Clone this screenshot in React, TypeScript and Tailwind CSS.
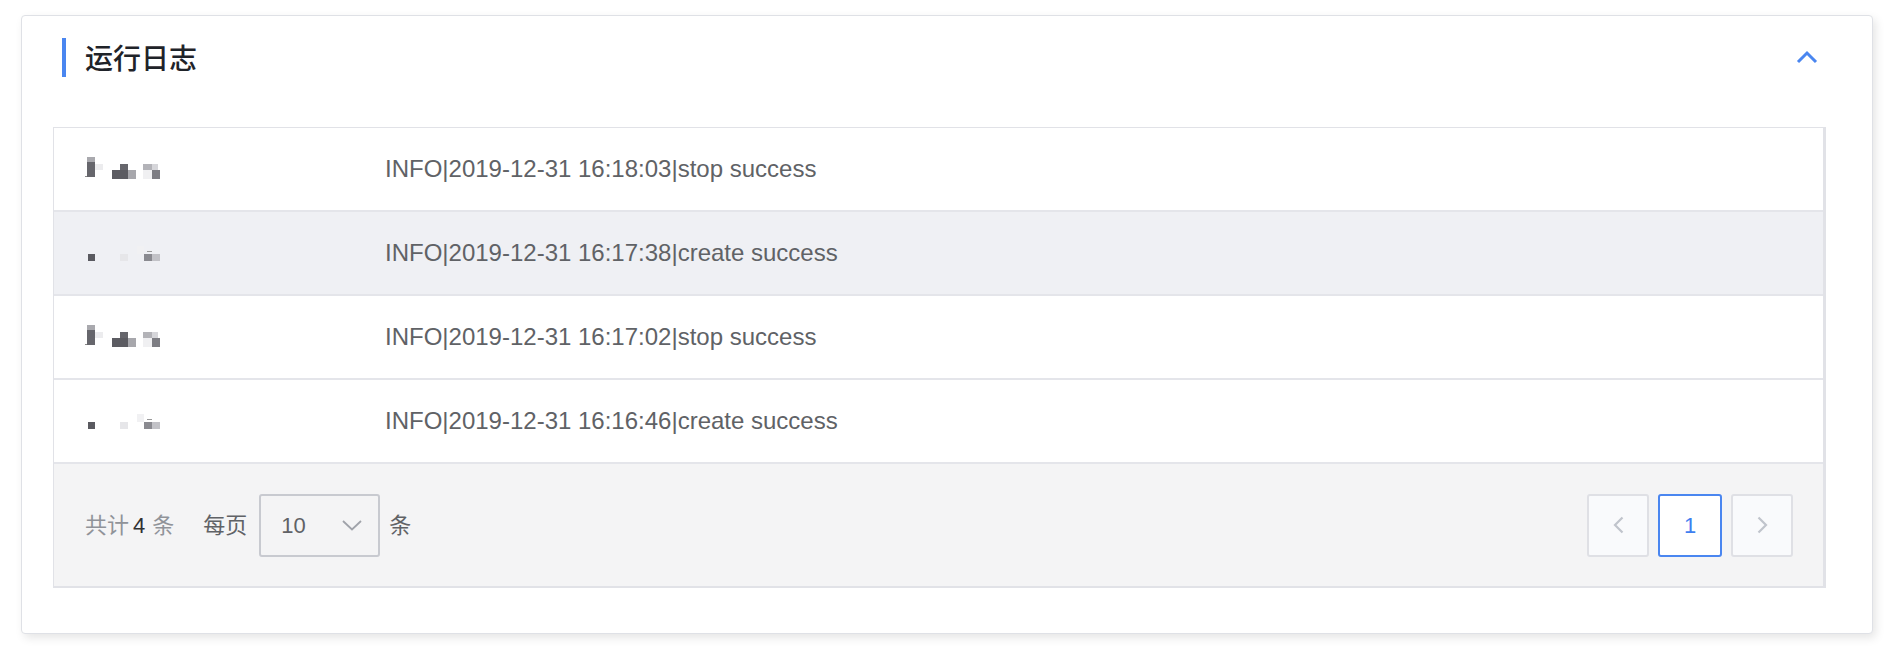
import React from "react";

type Block = [number, number, number, number, string];

// pixelated (masked) operator names
const blurA: Block[] = [
  [2, 2, 8, 5, "#a9a9ae"],
  [2, 7, 8, 15, "#66666c"],
  [0, 21, 2, 1, "#888"],
  [10, 9, 8, 6, "#ececee"],
  [35, 9, 8, 6, "#66666c"],
  [27, 15, 16, 9, "#5c5c62"],
  [43, 15, 8, 9, "#a7a7ac"],
  [58, 9, 9, 6, "#b3b3b8"],
  [67, 9, 6, 6, "#d6d6da"],
  [58, 15, 9, 9, "#f0f0f2"],
  [67, 15, 8, 9, "#7d7d83"],
];

const blurB: Block[] = [
  [3, 15, 7, 7, "#5a5a60"],
  [35, 15, 8, 7, "#e6e6e9"],
  [52, 7, 7, 8, "#f1f1f3"],
  [59, 15, 8, 7, "#8a8a90"],
  [67, 15, 8, 7, "#c2c2c7"],
  [62, 12, 5, 1, "#999"],
];

const logs = [
  { blur: blurA, text: "INFO|2019-12-31 16:18:03|stop success" },
  { blur: blurB, text: "INFO|2019-12-31 16:17:38|create success" },
  { blur: blurA, text: "INFO|2019-12-31 16:17:02|stop success" },
  { blur: blurB, text: "INFO|2019-12-31 16:16:46|create success" },
];

function Blurred({ blocks }: { blocks: Block[] }) {
  return (
    <svg width="80" height="28" viewBox="0 0 80 28">
      {blocks.map(([x, y, w, h, c], i) => (
        <rect key={i} x={x} y={y} width={w} height={h} fill={c} />
      ))}
    </svg>
  );
}

export default function App() {
  return (
    <div className="min-h-screen bg-white pt-[15px] pl-[21px] pr-[15px] font-['Liberation_Sans','Noto_Sans_CJK_SC',sans-serif]">
      <div className="rounded-[4px] border border-[#dfe1e6] bg-white pb-[45px] shadow-[3px_4px_10px_rgba(0,0,0,0.1)]">
        {/* header */}
        <div className="flex h-[82px] items-center justify-between pl-[40px] pr-[54px]">
          <div className="flex items-center">
            <span className="h-[39px] w-[4px] bg-[#4a86f0]" />
            <h2 className="ml-[19px] font-['Noto_Sans_CJK_SC',sans-serif] text-[28px] font-medium text-[#1f2329]">
              运行日志
            </h2>
          </div>
          <svg width="22" height="14" viewBox="0 0 22 14" fill="none">
            <polyline points="2,12 11,3 20,12" stroke="#4a86f0" strokeWidth="3" />
          </svg>
        </div>

        {/* log table */}
        <div className="ml-[31px] mr-[46px] mt-[29px] border border-r-[3px] border-b-2 border-[#e1e2e7]">
          {logs.map((log, i) => (
            <div
              key={i}
              className={`flex h-[84px] items-center border-b-2 border-[#e4e5ea] ${
                i === 1 ? "bg-[#eff0f4]" : "bg-white"
              }`}
            >
              <div className="w-[331px] pl-[31px]">
                <Blurred blocks={log.blur} />
              </div>
              <span className="text-[24px] text-[#606266]">{log.text}</span>
            </div>
          ))}

          {/* pagination */}
          <div className="flex h-[122px] items-center justify-between bg-[#f4f4f5] pl-[31px] pr-[30px]">
            <div className="flex items-center text-[22px]">
              <span className="text-[#909399]">共计</span>
              <span className="ml-[4px] mr-[7px] text-[#303133]">4</span>
              <span className="text-[#909399]">条</span>
              <span className="ml-[29px] text-[#606266]">每页</span>
              <div className="ml-[12px] flex h-[63px] w-[121px] items-center justify-between rounded-[3px] border-2 border-[#c8cad0] bg-[#f4f4f5] pl-[20px] pr-[16px]">
                <span className="text-[22px] text-[#606266]">10</span>
                <svg width="20" height="11" viewBox="0 0 20 11" fill="none">
                  <polyline points="1,1 10,9.5 19,1" stroke="#a0a3aa" strokeWidth="1.8" />
                </svg>
              </div>
              <span className="ml-[9px] text-[#606266]">条</span>
            </div>

            <div className="flex items-center gap-[9px]">
              <button className="flex h-[63px] w-[62px] items-center justify-center rounded-[3px] border-2 border-[#dfe0e5] bg-[#f9fafc]">
                <svg width="11" height="18" viewBox="0 0 11 18" fill="none">
                  <polyline points="9.5,1.5 2,9 9.5,16.5" stroke="#c0c4cc" strokeWidth="2.2" />
                </svg>
              </button>
              <button className="flex h-[63px] w-[64px] items-center justify-center rounded-[3px] border-2 border-[#4a86f0] bg-white text-[22px] text-[#3f7ff0]">
                1
              </button>
              <button className="flex h-[63px] w-[62px] items-center justify-center rounded-[3px] border-2 border-[#dfe0e5] bg-[#f9fafc]">
                <svg width="11" height="18" viewBox="0 0 11 18" fill="none">
                  <polyline points="1.5,1.5 9,9 1.5,16.5" stroke="#c0c4cc" strokeWidth="2.2" />
                </svg>
              </button>
            </div>
          </div>
        </div>
      </div>
    </div>
  );
}
